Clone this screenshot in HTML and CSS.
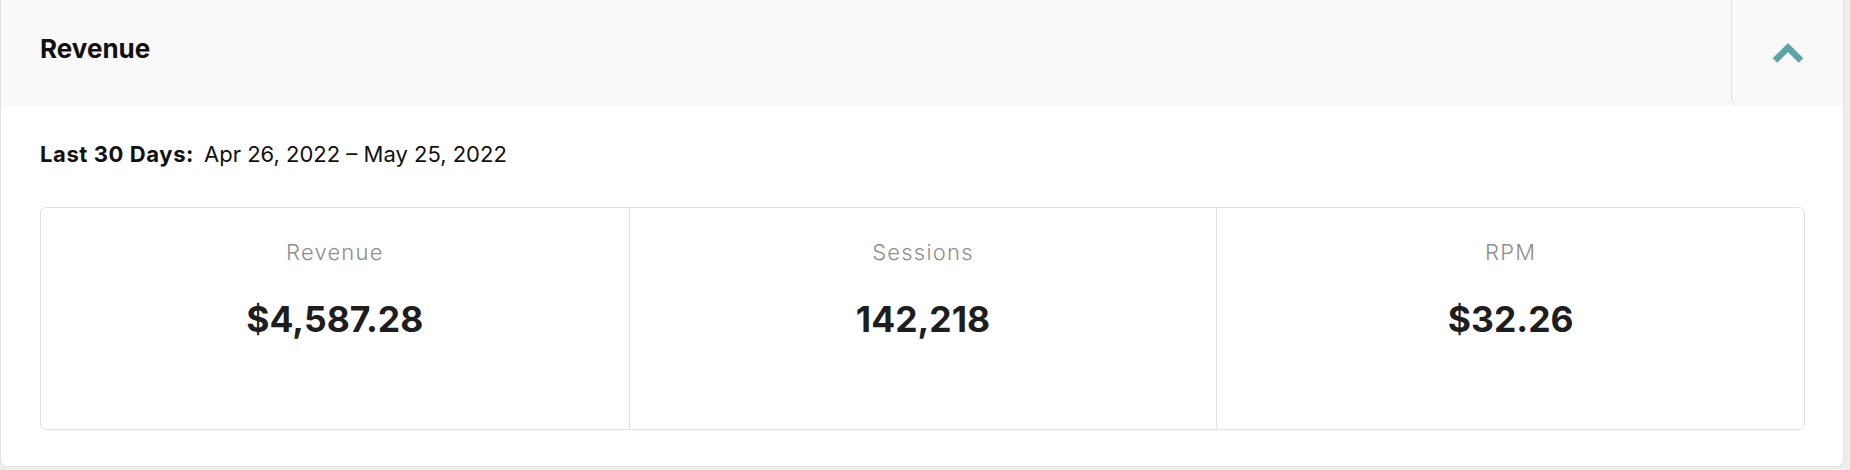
FILE: index.html
```html
<!DOCTYPE html>
<html lang="en">
<head>
<meta charset="utf-8">
<title>Revenue</title>
<link rel="stylesheet" href="styles.css">
</head>
<body>
<section class="card">
  <header class="card-header">
    <h2 class="card-title">Revenue</h2>
    <button class="toggle" type="button" aria-label="Collapse">
      <svg class="chevron" width="32" height="22" viewBox="0 0 32 22" aria-hidden="true">
        <polyline points="3,18.5 16,5.5 29,18.5" fill="none" stroke="#5ba4a9" stroke-width="6.5" stroke-linecap="butt" stroke-linejoin="miter"/>
      </svg>
    </button>
  </header>
  <div class="card-body">
    <p class="range"><strong class="range-label">Last 30 Days:</strong><span class="range-dates">Apr 26, 2022 – May 25, 2022</span></p>
    <div class="stats">
      <div class="stat">
        <div class="stat-label">Revenue</div>
        <div class="stat-value">$4,587.28</div>
      </div>
      <div class="stat">
        <div class="stat-label">Sessions</div>
        <div class="stat-value">142,218</div>
      </div>
      <div class="stat">
        <div class="stat-label">RPM</div>
        <div class="stat-value">$32.26</div>
      </div>
    </div>
  </div>
</section>
</body>
</html>
```
FILE: styles.css
```css
* { box-sizing: border-box; }

html, body {
  margin: 0;
  padding: 0;
}

body {
  background: #eeeeee;
  font-family: "Inter", "Lato", "Liberation Sans", sans-serif;
  color: #111111;
  height: 470px;
  overflow: hidden;
}

.card {
  width: 1844px;
  height: 467px;
  background: #ffffff;
  border: 1px solid #e3e3e3;
  border-top: none;
  border-radius: 0 0 8px 8px;
  overflow: hidden;
}

.card-header {
  height: 106px;
  background: #f9f9f9;
  display: flex;
  align-items: stretch;
  justify-content: space-between;
}

.card-title {
  margin: 0;
  padding: 36px 0 0 39px;
  font-size: 26px;
  line-height: 26px;
  font-weight: 700;
  color: #111111;
}

.toggle {
  width: 112px;
  margin: 0;
  padding: 0;
  border: none;
  border-left: 1px solid #e2e2e2;
  border-radius: 0 0 0 8px;
  background: #f9f9f9;
  display: flex;
  align-items: center;
  justify-content: center;
  cursor: pointer;
}

.chevron { display: block; }

.card-body {
  padding: 0 38px 0 39px;
}

.range {
  margin: 35px 0 0;
  font-size: 22px;
  line-height: 26px;
  display: flex;
  gap: 10px;
  color: #111111;
}

.range-label { font-weight: 700; letter-spacing: 0.6px; }
.range-dates { font-weight: 400; }

.stats {
  margin-top: 40px;
  height: 223px;
  border: 1px solid #e2e2e2;
  border-radius: 6px;
  display: grid;
  grid-template-columns: repeat(3, 1fr);
}

.stat {
  text-align: center;
  padding-top: 31px;
}

.stat + .stat {
  border-left: 1px solid #e2e2e2;
}

.stat-label {
  font-size: 22px;
  line-height: 26px;
  font-weight: 300;
  letter-spacing: 1.2px;
  color: #8e8e8e;
}

.stat-value {
  margin-top: 34px;
  font-size: 35.5px;
  line-height: 42px;
  font-weight: 700;
  color: #1e1e1e;
}
```
